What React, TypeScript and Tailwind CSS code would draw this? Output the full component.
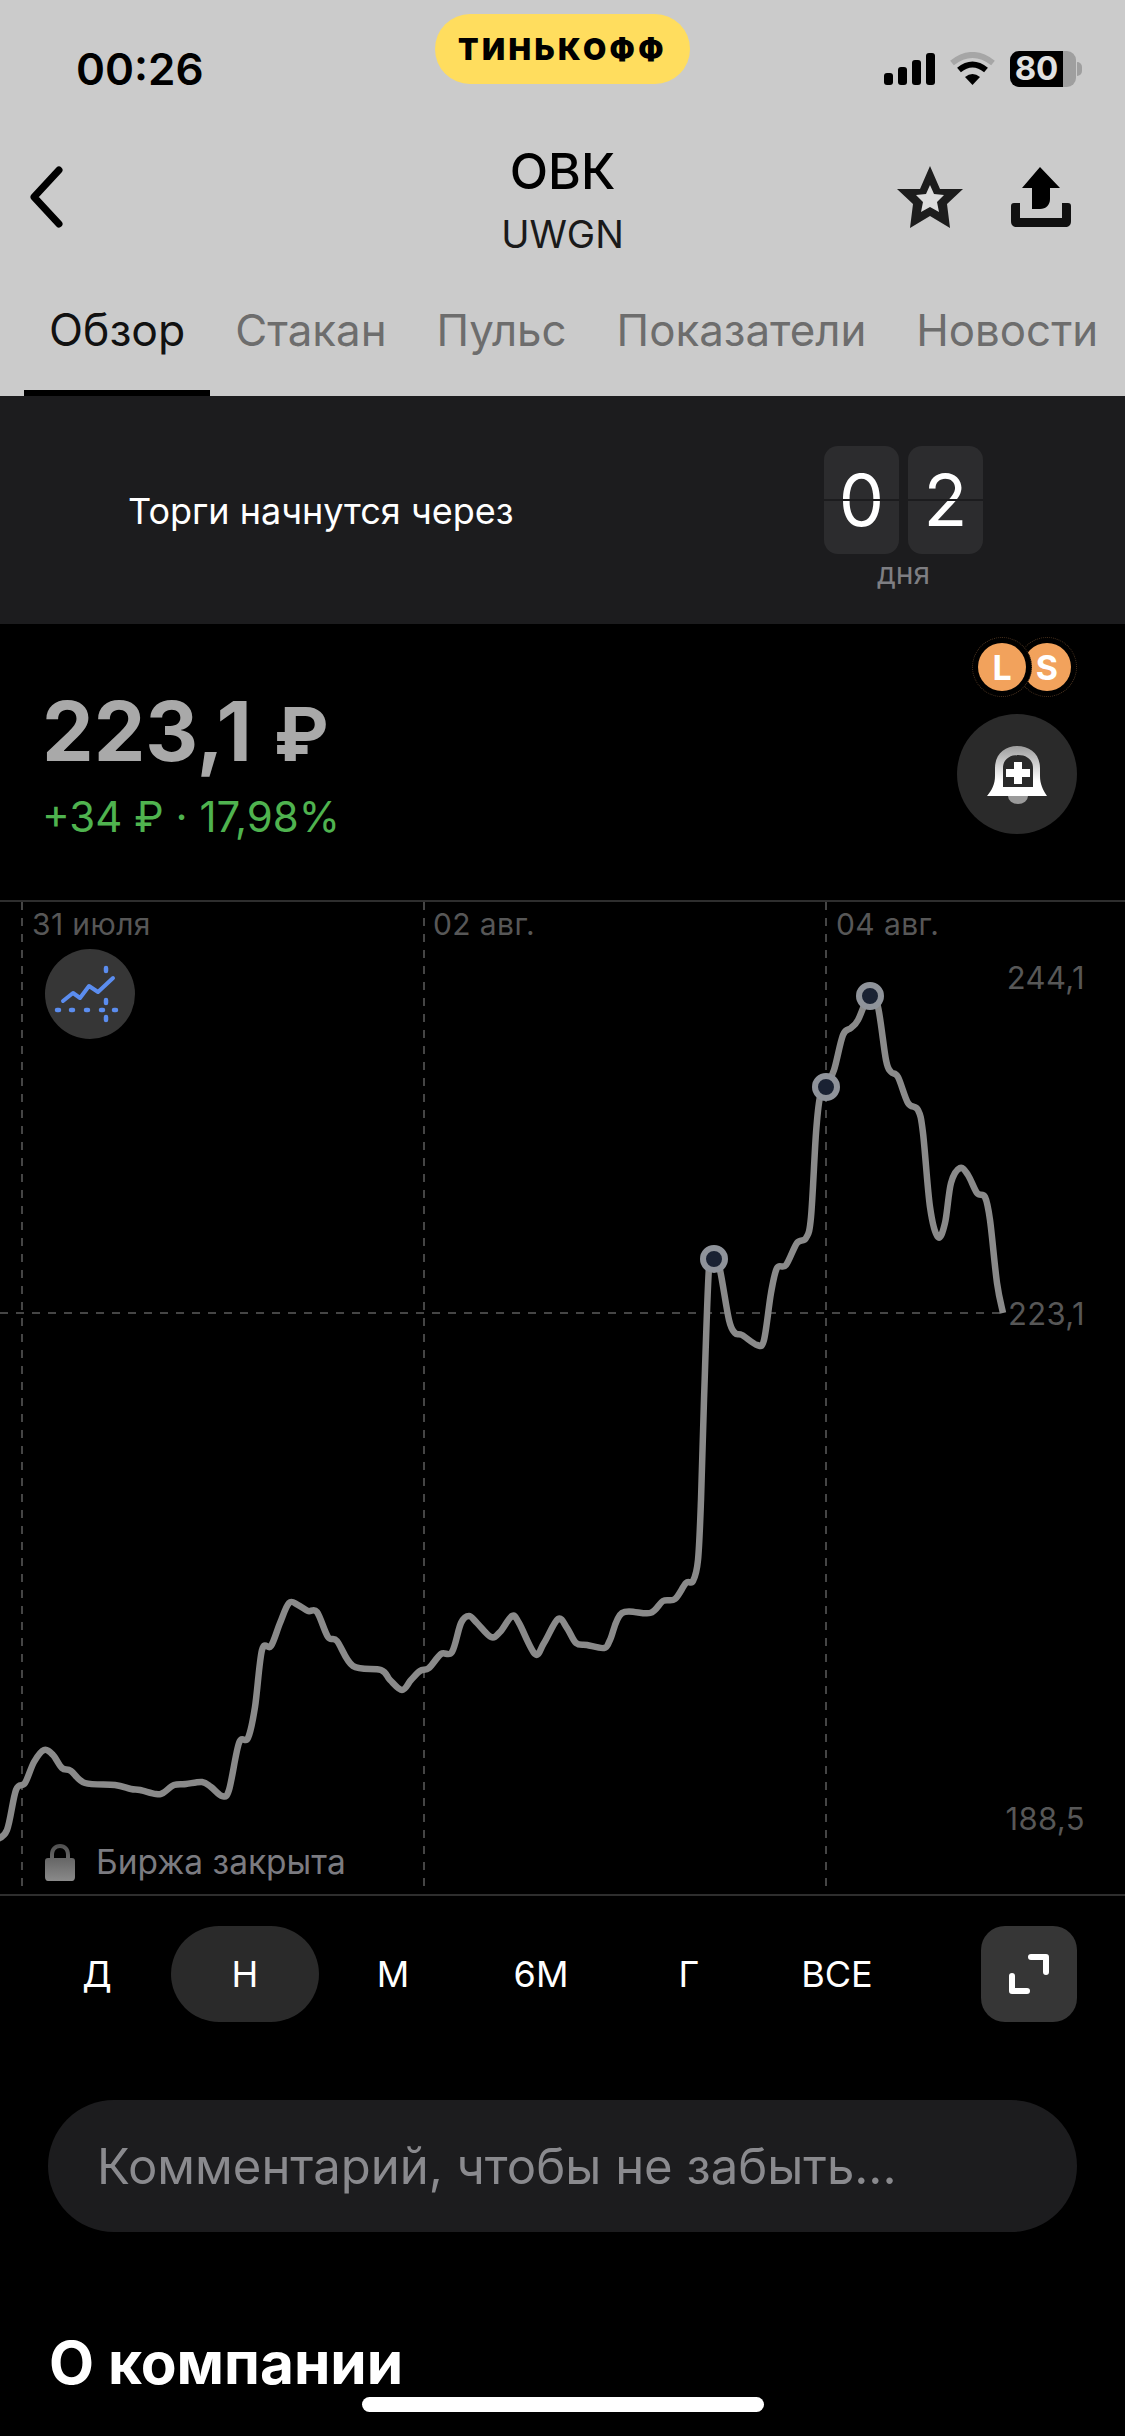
const tabs = ['Обзор', 'Стакан', 'Пульс', 'Показатели', 'Новости'];
const periods = ['Д', 'Н', 'М', '6М', 'Г', 'ВСЕ'];

// price line, in page coordinates
const points: [number, number][] = [
  [-4, 1840], [7, 1830], [16, 1790], [25, 1783], [34, 1762], [44, 1750], [53, 1755], [62, 1768], [71, 1771],
  [85, 1783], [115, 1785], [131, 1789], [140, 1790], [156, 1794], [163, 1793], [174, 1785], [186, 1784],
  [202, 1782], [211, 1787], [222, 1796], [229, 1790], [239, 1743], [248, 1738], [255, 1707], [262, 1650],
  [271, 1646], [280, 1623], [289, 1603], [298, 1605], [308, 1611], [317, 1612], [328, 1637], [337, 1641],
  [353, 1666], [381, 1670], [390, 1680], [402, 1690], [411, 1680], [420, 1671], [429, 1668], [441, 1654],
  [452, 1652], [461, 1623], [469, 1616], [477, 1623], [491, 1637], [500, 1632], [512, 1616], [519, 1623],
  [535, 1654], [544, 1643], [558, 1619], [567, 1628], [576, 1643], [587, 1645], [604, 1648], [610, 1640],
  [622, 1613], [650, 1613], [663, 1601], [675, 1599], [686, 1583], [693, 1581], [698, 1560], [701, 1500],
  [704, 1400], [709, 1267], [714, 1255], [720, 1270], [729, 1320], [735, 1333], [742, 1335], [757, 1345],
  [764, 1340], [771, 1293], [777, 1268], [786, 1265], [797, 1243], [806, 1238], [811, 1217], [816, 1133],
  [820, 1097], [826, 1087], [834, 1070], [843, 1035], [851, 1028], [858, 1020], [870, 994], [878, 1007],
  [886, 1060], [891, 1072], [898, 1077], [908, 1103], [918, 1110], [923, 1133], [930, 1207], [938, 1237],
  [945, 1223], [951, 1183], [960, 1168], [968, 1175], [977, 1193], [985, 1197], [990, 1220], [997, 1283],
  [1003, 1313],
];

function smoothPath(pts: [number, number][]) {
  let d = `M${pts[0][0]} ${pts[0][1]}`;
  for (let i = 0; i < pts.length - 1; i++) {
    const p0 = pts[i - 1] ?? pts[i];
    const p1 = pts[i];
    const p2 = pts[i + 1];
    const p3 = pts[i + 2] ?? p2;
    const c1x = p1[0] + (p2[0] - p0[0]) / 6;
    const c1y = p1[1] + (p2[1] - p0[1]) / 6;
    const c2x = p2[0] - (p3[0] - p1[0]) / 6;
    const c2y = p2[1] - (p3[1] - p1[1]) / 6;
    d += ` C${c1x} ${c1y} ${c2x} ${c2y} ${p2[0]} ${p2[1]}`;
  }
  return d;
}

function StatusBar() {
  return (
    <div className="flex h-[123px] pt-[14px]">
      <div className="flex h-[109px] w-[435px] items-center pl-[76px] text-[44px] font-semibold text-black">00:26</div>
      <div className="flex h-[70px] w-[255px] items-center justify-center rounded-full bg-[#ffdd5e]">
        <span className="text-[30px] font-black tracking-[3.4px] text-black">ТИНЬКОФФ</span>
      </div>
      <div className="flex h-[109px] flex-1 items-center justify-end gap-[15px] pr-[43px]">
        <div className="flex items-end gap-[5px]">
          <div className="h-[12px] w-[9px] rounded-[3px] bg-black" />
          <div className="h-[18px] w-[9px] rounded-[3px] bg-black" />
          <div className="h-[25px] w-[9px] rounded-[3px] bg-black" />
          <div className="h-[32px] w-[9px] rounded-[3px] bg-black" />
        </div>
        <svg width="45" height="33" viewBox="0 0 45 33">
          <path d="M2 11 Q22.5 -5 43 11" fill="none" stroke="#a6a6a6" strokeWidth="6" />
          <path d="M9 18 Q22.5 7 36 18" fill="none" stroke="#000" strokeWidth="6" />
          <path d="M15 25 Q22.5 19 30 25 L22.5 33 Z" fill="#000" />
        </svg>
        <div className="flex items-center">
          <div className="flex h-[36px] w-[53px] items-center justify-center rounded-l-[9px] bg-black text-[33px] leading-none font-bold text-[#e0e0e0]">
            80
          </div>
          <div className="h-[36px] w-[13px] rounded-r-[9px] bg-[#9f9f9f]" />
          <div className="ml-[1px] h-[14px] w-[5px] rounded-r-full bg-[#9f9f9f]" />
        </div>
      </div>
    </div>
  );
}

function NavBar() {
  return (
    <div className="grid h-[148px] grid-cols-[1fr_auto_1fr] items-center">
      <div className="pl-[28px]">
        <svg width="36" height="62" viewBox="0 0 36 62" className="block">
          <path d="M31 4 L6 31 L31 58" fill="none" stroke="#000" strokeWidth="7" strokeLinecap="round" strokeLinejoin="round" />
        </svg>
      </div>
      <div className="flex flex-col items-center">
        <div className="text-[50px] leading-[60px] font-medium text-black">ОВК</div>
        <div className="mt-[10px] -mb-[4px] text-[38px] leading-[46px] text-[#1a1a1a]">UWGN</div>
      </div>
      <div className="flex items-center justify-end gap-[48px] pr-[54px]">
        <svg width="66" height="62" viewBox="0 0 66 62">
          <path d="M33 0 L43 23 L66 23 L50 38 L53 62 L33 50 L13 62 L16 38 L0 23 L23 23 Z" fill="#1d1d1d" />
          <path d="M33 19 L37 28 L47 29 L40 36 L42 46 L33 41 L24 46 L26 36 L19 29 L29 28 Z" fill="#dcdcdc" />
        </svg>
        <svg width="60" height="60" viewBox="0 0 60 60">
          <path d="M29 0 L49 21 L39 21 L39 32 C39 38 35 42 29 42 L21 42 L21 21 L11 21 Z" fill="#000" />
          <path d="M0 39 C0 37 1 36 3 36 L9 36 L9 51 L51 51 L51 36 L57 36 C59 36 60 37 60 39 L60 54 C60 58 58 60 54 60 L6 60 C2 60 0 58 0 54 Z" fill="#111" />
        </svg>
      </div>
    </div>
  );
}

function Tabs() {
  return (
    <div className="flex h-[125px] items-end overflow-hidden pl-[24px]">
      {tabs.map((tab, i) => (
        <div
          key={tab}
          className={
            i === 0
              ? 'flex h-[119px] shrink-0 items-center border-b-[6px] border-black px-[25px] pb-[6px] text-[44.5px] text-[#111]'
              : 'flex h-[119px] shrink-0 items-center border-b-[6px] border-transparent px-[25px] pb-[6px] text-[43.8px] text-[#6d6d6d]'
          }
        >
          {tab}
        </div>
      ))}
    </div>
  );
}

function FlipDigit({ value }: { value: string }) {
  return (
    <div className="relative flex h-[108px] w-[75px] items-center justify-center rounded-[14px] bg-[#2c2c2e] text-[72px] leading-none text-white">
      {value}
      <div className="absolute top-[53px] right-0 left-0 h-[2px] bg-[#1c1c1e]" />
    </div>
  );
}

function Banner() {
  return (
    <div className="flex h-[228px] items-start justify-between bg-[#1c1c1e] pt-[50px] pr-[142px] pl-[128px]">
      <div className="mt-[44px] text-[36px] leading-[42px] text-white">Торги начнутся через</div>
      <div className="flex flex-col items-center">
        <div className="flex gap-[9px]">
          <FlipDigit value="0" />
          <FlipDigit value="2" />
        </div>
        <div className="mt-[3px] text-[30px] leading-[32px] text-[#7e7e82]">дня</div>
      </div>
    </div>
  );
}

function Badge({ letter }: { letter: string }) {
  return (
    <div className="flex size-[48px] items-center justify-center rounded-full bg-[#f2a25c] text-[34px] font-bold text-white">
      {letter}
    </div>
  );
}

function Price() {
  return (
    <div className="flex h-[276px] justify-between pr-[48px] pl-[42px]">
      <div className="pt-[58px]">
        <div className="flex items-baseline gap-[22px] text-[82px] leading-[100px] font-bold text-[#a9a9a9]">
          223,1
          <span className="text-[74px]">₽</span>
        </div>
        <div className="mt-[9px] text-[42px] leading-[48px] text-[#4fb34f]">+34 ₽ · 17,98%</div>
      </div>
      <div className="flex flex-col items-end pt-[13px]">
        <div className="flex">
          <div className="z-10 flex size-[60px] items-center justify-center rounded-full border border-dotted border-[#4a3320] bg-black">
            <Badge letter="L" />
          </div>
          <div className="-ml-[15px] flex size-[60px] items-center justify-center rounded-full border border-dotted border-[#4a3320] bg-black">
            <Badge letter="S" />
          </div>
        </div>
        <div className="mt-[17px] flex size-[120px] items-center justify-center rounded-full bg-[#2a2a2a]">
          <svg width="60" height="58" viewBox="0 0 60 58" className="mt-[2px]">
            <defs>
              <linearGradient id="bell" x1="0" y1="0" x2="0" y2="1">
                <stop offset="0" stopColor="#9d9d9d" />
                <stop offset="0.7" stopColor="#ffffff" />
              </linearGradient>
            </defs>
            <path d="M21 50 A10 8 0 0 0 41 50 Z" fill="#9a9a9a" />
            <path
              fillRule="evenodd"
              d="M0 50 C5 44 8 38 8 30 V22 C8 8 18 0 30 0 C43 0 53 8 53 22 V30 C53 38 56 44 60 50 Z M16 41 H46 V22 C46 14 40 9 31 9 C22 9 16 14 16 22 Z"
              fill="url(#bell)"
            />
            <path d="M27 16 H35 V23 H43 V31 H35 V38 H27 V31 H19 V23 H27 Z" fill="#fff" />
          </svg>
        </div>
      </div>
    </div>
  );
}

function ChartIcon() {
  return (
    <svg width="90" height="90" viewBox="0 0 90 90" className="absolute top-[47px] left-[45px]">
      <circle cx="45" cy="45" r="45" fill="#363636" />
      <path d="M18 52 L28 44 L35 49 L44 37 L53 43 L68 29" fill="none" stroke="#5b8def" strokeWidth="4" strokeLinejoin="round" strokeLinecap="round" />
      <path d="M12 61 H14 M26 61 H28 M41 61 H43 M56 61 H58 M69 61 H71" fill="none" stroke="#5b8def" strokeWidth="4.5" strokeLinecap="round" />
      <path d="M61 19 V22 M61 51 V54 M61 68 V71" fill="none" stroke="#5b8def" strokeWidth="4.5" strokeLinecap="round" />
    </svg>
  );
}

function Chart() {
  const dateClass = 'absolute top-[4px] text-[30px] leading-[36px] tracking-[0.4px] text-[#575757]';
  const priceClass = 'absolute right-[40px] text-[31px] leading-[36px] tracking-[0.4px] text-[#575757]';
  return (
    <div className="relative h-[996px] border-y-[2px] border-[#2e2e2e]">
      <svg width="1125" height="992" viewBox="0 902 1125 992" className="absolute top-0 left-0">
        <path
          d="M22 902 V1894 M424 902 V1894 M826 902 V1894 M0 1313 H1003"
          fill="none"
          stroke="#454545"
          strokeWidth="2"
          strokeDasharray="8 8"
        />
        <path d={smoothPath(points)} fill="none" stroke="#8a8a8a" strokeWidth="6.5" strokeLinejoin="round" />
        {[[714, 1259], [826, 1087], [870, 996]].map(([cx, cy]) => (
          <circle key={cx} cx={cx} cy={cy} r="11" fill="#1a2233" stroke="#8f939a" strokeWidth="6" />
        ))}
      </svg>
      <div className={`${dateClass} left-[32px]`}>31 июля</div>
      <div className={`${dateClass} left-[433px]`}>02 авг.</div>
      <div className={`${dateClass} left-[836px]`}>04 авг.</div>
      <div className={`${priceClass} top-[58px]`}>244,1</div>
      <div className={`${priceClass} top-[394px]`}>223,1</div>
      <div className={`${priceClass} top-[899px]`}>188,5</div>
      <ChartIcon />
      <div className="absolute top-[941px] left-[45px] flex items-center gap-[21px]">
        <svg width="30" height="37" viewBox="0 0 30 37">
          <defs>
            <linearGradient id="lock" x1="0" y1="0" x2="0" y2="1">
              <stop offset="0" stopColor="#4f4f4f" />
              <stop offset="1" stopColor="#8a8a8a" />
            </linearGradient>
          </defs>
          <path
            fillRule="evenodd"
            d="M5 14 V11 C5 4 9 0 15 0 C21 0 25 4 25 11 V14 H27 C29 14 30 15 30 17 V33 C30 35 29 37 27 37 H3 C1 37 0 35 0 33 V17 C0 15 1 14 3 14 Z M9 14 H21 V11 C21 7 19 4 15 4 C11 4 9 7 9 11 Z"
            fill="url(#lock)"
          />
        </svg>
        <span className="text-[33.5px] leading-[38px] text-[#7b7b80]">Биржа закрыта</span>
      </div>
    </div>
  );
}

function Periods() {
  return (
    <div className="flex pt-[30px] pr-[48px] pl-[23px]">
      {periods.map((p) => (
        <div
          key={p}
          className={
            p === 'Н'
              ? 'flex h-[96px] w-[148px] items-center justify-center rounded-full bg-[#2a2a2a] text-[36px] text-white'
              : 'flex h-[96px] w-[148px] items-center justify-center text-[36px] text-white'
          }
        >
          {p}
        </div>
      ))}
      <div className="ml-auto flex size-[96px] items-center justify-center rounded-[24px] bg-[#363636]">
        <svg width="96" height="96" viewBox="0 0 96 96">
          <path d="M50 31 H65 V46 M31 50 V65 H46" fill="none" stroke="#fff" strokeWidth="6" strokeLinecap="round" strokeLinejoin="round" />
        </svg>
      </div>
    </div>
  );
}

export default function App() {
  return (
    <div className="relative h-[2436px] w-[1125px] overflow-hidden bg-black font-['Inter',sans-serif]">
      <div className="h-[396px] bg-[#cbcbcb]">
        <StatusBar />
        <NavBar />
        <Tabs />
      </div>
      <Banner />
      <Price />
      <Chart />
      <Periods />
      <div className="mx-[48px] mt-[78px] flex h-[132px] items-center rounded-full bg-[#1c1c1e] pl-[49px] text-[49px] text-[#8a8a8e]">
        <span className="mt-[2px]">Комментарий, чтобы не забыть...</span>
      </div>
      <div className="mt-[95px] pl-[49px] text-[58.5px] leading-[72px] font-bold text-white">О компании</div>
      <div className="absolute top-[2397px] left-[362px] h-[15px] w-[402px] rounded-full bg-white" />
    </div>
  );
}
